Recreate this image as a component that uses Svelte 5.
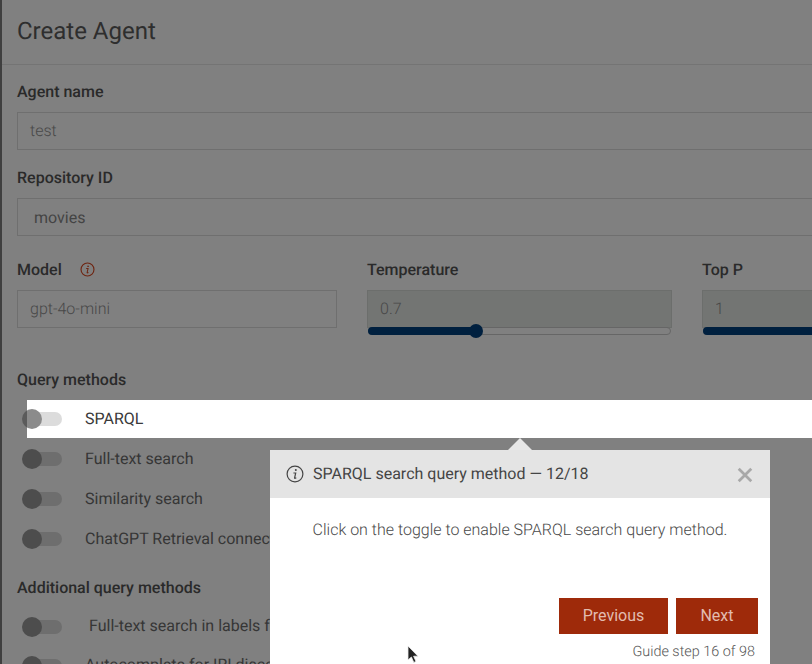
<script>
	const queryMethods = ['Full-text search', 'Similarity search', 'ChatGPT Retrieval connector'];
</script>

<div class="screen">
	<div class="dialog">
		<header class="dialog-header">
			<h1>Create Agent</h1>
		</header>

		<form class="form">
			<div class="field">
				<span class="label">Agent name</span>
				<div class="input">test</div>
			</div>
			<div class="field">
				<span class="label">Repository ID</span>
				<div class="input select">movies</div>
			</div>

			<div class="params">
				<div class="field">
					<span class="label">
						Model
						<svg class="model-info" viewBox="0 0 16 16" width="15" height="15" aria-hidden="true">
							<circle cx="8" cy="8" r="6.9" fill="none" stroke="currentColor" stroke-width="1.2" />
							<circle cx="8.6" cy="4.5" r="0.9" fill="currentColor" />
							<path d="M6.6 7h2l-1 4.2q-.1.6.6.4l.8-.4" fill="none" stroke="currentColor" stroke-width="1.1" />
						</svg>
					</span>
					<div class="input">gpt-4o-mini</div>
				</div>
				<div class="field">
					<span class="label">Temperature</span>
					<div class="input number">0.7</div>
					<div class="slider">
						<div class="slider-fill" style="width: 35.7%"></div>
						<div class="slider-thumb" style="left: 35.7%"></div>
					</div>
				</div>
				<div class="field">
					<span class="label">Top P</span>
					<div class="input number">1</div>
					<div class="slider">
						<div class="slider-fill" style="width: 100%"></div>
					</div>
				</div>
			</div>

			<section class="methods">
				<span class="label">Query methods</span>
				<div class="toggle-row active">
					<span class="toggle"><span class="knob"></span></span>
					<span class="row-text">SPARQL</span>
				</div>
				{#each queryMethods as method}
					<div class="toggle-row">
						<span class="toggle"><span class="knob"></span></span>
						<span class="row-text">{method}</span>
					</div>
				{/each}
			</section>

			<section class="methods additional">
				<span class="label">Additional query methods</span>
				<div class="toggle-row">
					<span class="toggle"><span class="knob"></span></span>
					<span class="row-text indented">Full-text search in labels for IRI discovery</span>
				</div>
				<div class="toggle-row">
					<span class="toggle"><span class="knob"></span></span>
					<span class="row-text">Autocomplete for IRI discovery</span>
				</div>
			</section>
		</form>
	</div>

	<div class="guide">
		<div class="guide-arrow"></div>
		<div class="guide-header">
			<svg viewBox="0 0 18 18" width="18" height="18" aria-hidden="true">
				<circle cx="9" cy="9" r="7.9" fill="none" stroke="currentColor" stroke-width="1.2" />
				<circle cx="9.8" cy="5" r="1" fill="currentColor" />
				<path d="M7.4 8h2.3l-1.1 4.8q-.1.7.7.4l1-.5" fill="none" stroke="currentColor" stroke-width="1.2" />
			</svg>
			<span class="guide-title">SPARQL search query method — 12/18</span>
			<svg class="guide-close" viewBox="0 0 14 14" width="16" height="16" aria-hidden="true">
				<path d="M1.5 1.5l11 11M12.5 1.5l-11 11" fill="none" stroke="currentColor" stroke-width="2.4" />
			</svg>
		</div>
		<div class="guide-body">Click on the toggle to enable SPARQL search query method.</div>
		<div class="guide-actions">
			<button type="button">Previous</button>
			<button type="button" class="next">Next</button>
		</div>
		<div class="guide-footer">Guide step 16 of 98</div>
	</div>

	<svg class="cursor" viewBox="0 0 12 19" width="12" height="19" aria-hidden="true">
		<path d="M1 1v14l3.4-3 2.4 5.4 2.2-1-2.4-5.2h4.4z" fill="#222" stroke="#eee" stroke-width="0.8" />
	</svg>
</div>

<style>
	:global(body) {
		margin: 0;
		background: #808080;
	}

	.screen {
		position: relative;
		width: 812px;
		height: 664px;
		overflow: hidden;
		background: #808080;
		font-family: Roboto, 'Liberation Sans', sans-serif;
		font-size: 16px;
		color: #2c2c2c;
		text-rendering: geometricPrecision;
	}

	.dialog {
		width: 1100px;
		min-height: 700px;
		margin-left: 2px;
		box-shadow: -2px 0 0 #3f3f3f;
	}

	.dialog-header {
		height: 64px;
		padding: 0 15px;
		display: flex;
		align-items: center;
		border-bottom: 1px solid #747474;
	}

	h1 {
		margin: 0;
		font-size: 24px;
		font-weight: 400;
		color: #2e2e2e;
		position: relative;
		top: -1px;
	}

	.form {
		padding: 16px 15px 0;
		display: flex;
		flex-direction: column;
	}

	.field {
		display: flex;
		flex-direction: column;
		margin-bottom: 17px;
	}

	.label {
		display: flex;
		align-items: center;
		height: 20px;
		font-weight: 500;
		color: #2a2a2a;
		margin-bottom: 11px;
	}

	.input {
		box-sizing: border-box;
		height: 38px;
		padding: 0 12px 2px;
		display: flex;
		align-items: center;
		border: 1px solid #6f6f6f;
		font-weight: 300;
		color: #484848;
	}

	.select {
		padding: 0 12px 0 16px;
		font-weight: 400;
		color: #444;
	}

	.params {
		display: grid;
		grid-template-columns: 320px 305px 305px;
		column-gap: 30px;
		margin-top: 6px;
		margin-bottom: 34px;
	}

	.params .field {
		margin-bottom: 0;
	}

	.model-info {
		margin-left: 18px;
		color: #6e2410;
	}

	.number {
		background: #737573;
		border-color: #6c6e6c;
	}

	.slider {
		position: relative;
		height: 8px;
		margin: -1px 1px 0;
		border: 1px solid #666;
		border-radius: 4px;
		box-sizing: border-box;
	}

	.slider-fill {
		position: absolute;
		left: -1px;
		top: -1px;
		bottom: -1px;
		background: #00203f;
		border-radius: 4px;
	}

	.slider-thumb {
		position: absolute;
		top: 50%;
		width: 14px;
		height: 14px;
		margin: -7px 0 0 -7px;
		border-radius: 50%;
		background: #00203f;
	}

	.methods {
		display: flex;
		flex-direction: column;
	}

	.methods .label {
		margin-bottom: 0;
	}

	.toggle-row {
		display: flex;
		align-items: center;
		height: 40px;
		margin-left: 10px;
		color: #363636;
	}

	.methods .label + .toggle-row {
		margin-top: 11px;
	}

	.additional .toggle-row {
		height: 39px;
	}

	.additional .label + .toggle-row {
		margin-top: 10px;
	}

	.toggle-row.active {
		height: 38px;
		background: #fff;
		margin-right: -400px;
		margin-bottom: 1px;
		color: #3a3a3a;
	}

	.row-text {
		position: relative;
		top: -1px;
	}

	.toggle {
		position: relative;
		flex: none;
		width: 35px;
		height: 14px;
		margin-right: 23px;
		border-radius: 7px;
		background: #6e6e6e;
	}

	.active .toggle {
		background: #dcdcdc;
	}

	.knob {
		position: absolute;
		left: -5px;
		top: -3px;
		width: 20px;
		height: 20px;
		border-radius: 50%;
		background: #4d4d4d;
	}

	.active .knob {
		background: linear-gradient(90deg, #5b5b5b 5px, #8b8b8b 5px);
	}

	.indented {
		margin-left: 4px;
	}

	.additional {
		margin-top: 18px;
	}

	.guide {
		position: absolute;
		left: 270px;
		top: 450px;
		width: 500px;
		height: 260px;
		background: #fff;
		color: #444;
	}

	.guide-arrow {
		position: absolute;
		left: 238px;
		top: -12px;
		width: 0;
		height: 0;
		border-left: 12px solid transparent;
		border-right: 12px solid transparent;
		border-bottom: 12px solid #e8e8e8;
	}

	.guide-header {
		display: flex;
		align-items: center;
		gap: 9px;
		height: 48px;
		padding: 0 17px 0 16px;
		background: #e4e4e4;
		color: #454545;
	}

	.guide-title {
		flex: 1;
		position: relative;
		top: -1px;
	}

	.guide-close {
		color: #a8a8a8;
		position: relative;
		top: 1px;
	}

	.guide-body {
		height: 100px;
		padding-top: 22px;
		box-sizing: border-box;
		text-align: center;
		font-weight: 300;
		color: #484848;
	}

	.guide-actions {
		display: flex;
		justify-content: flex-end;
		gap: 8px;
		padding-right: 12px;
	}

	.guide-actions button {
		height: 36px;
		width: 109px;
		border: 0;
		padding: 0 0 2px;
		background: #9e2a0a;
		color: #e2bcb0;
		font: inherit;
	}

	.guide-actions .next {
		width: 82px;
	}

	.guide-footer {
		margin-top: 9px;
		padding-right: 15px;
		text-align: right;
		font-size: 14.4px;
		font-weight: 300;
		color: #555;
	}

	.cursor {
		position: absolute;
		left: 407px;
		top: 645px;
	}
</style>
